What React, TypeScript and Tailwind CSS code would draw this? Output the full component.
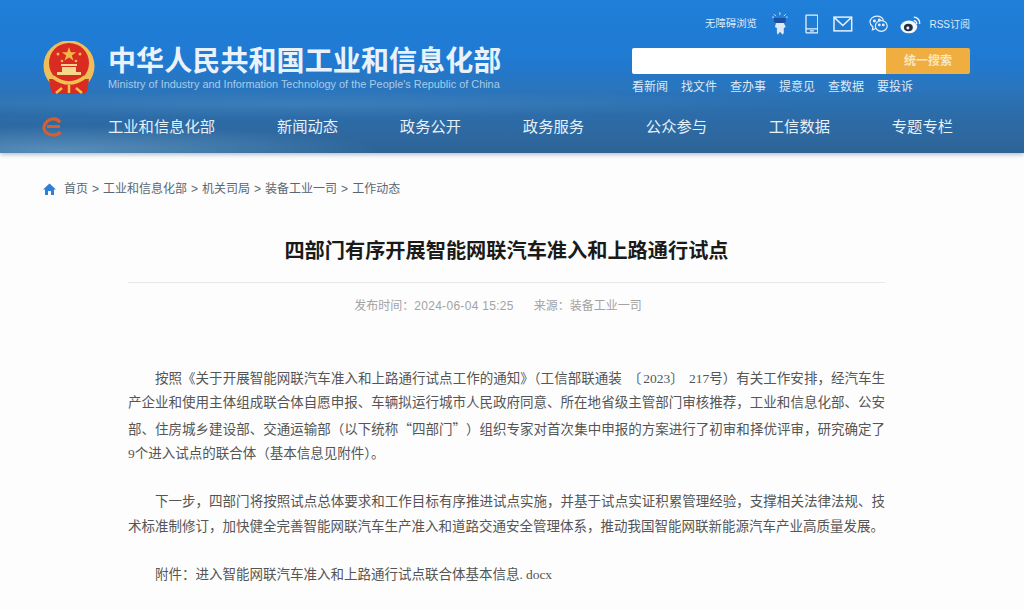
const navItems = ["工业和信息化部", "新闻动态", "政务公开", "政务服务", "公众参与", "工信数据", "专题专栏"];
const quickLinks = ["看新闻", "找文件", "查办事", "提意见", "查数据", "要投诉"];
const crumbs = ["首页", "工业和信息化部", "机关司局", "装备工业一司", "工作动态"];

// full-width punctuation
const C = "\uFF0C";
const L = "\uFF08";
const R = "\uFF09";
const COLON = "\uFF1A";

const line2 = `产企业和使用主体组成联合体自愿申报、车辆拟运行城市人民政府同意、所在地省级主管部门审核推荐${C}工业和信息化部、公安`;
const line4 = `9个进入试点的联合体${L}基本信息见附件${R}。`;
const para2 = `下一步${C}四部门将按照试点总体要求和工作目标有序推进试点实施${C}并基于试点实证积累管理经验${C}支撑相关法律法规、技术标准制修订${C}加快健全完善智能网联汽车生产准入和道路交通安全管理体系${C}推动我国智能网联新能源汽车产业高质量发展。`;

const justified = "[text-align-last:justify] whitespace-nowrap";

function Emblem() {
  return (
    <svg width="52" height="54" viewBox="0 0 52 54">
      <circle cx="26" cy="25" r="25.500" fill="#efbe58" />
      <circle cx="26" cy="22" r="20" fill="#d92b22" />
      <polygon points="26,6 27.800,11.200 33.200,11.200 28.800,14.400 30.500,19.500 26,16.400 21.500,19.500 23.200,14.400 18.800,11.200 24.200,11.200" fill="#f2b84a" />
      <circle cx="15" cy="13" r="1.500" fill="#f2b84a" />
      <circle cx="37" cy="13" r="1.500" fill="#f2b84a" />
      <circle cx="19" cy="20" r="1.300" fill="#f2b84a" />
      <circle cx="33" cy="20" r="1.300" fill="#f2b84a" />
      <path d="M18 23h16v2H18zM19 26h14v5H19zM14 31h24v3H14z" fill="#f6d88a" />
      <path d="M6 38h40l-2 12q-1 3-5 3H13q-4 0-5-3z" fill="#d92b22" />
      <path d="M10 36q16 12 32 0" stroke="#f2c14e" strokeWidth="3.500" fill="none" />
      <path d="M19 47l-6 5M33 47l6 5M26 44v8" stroke="#f2c14e" strokeWidth="2.500" fill="none" />
    </svg>
  );
}

export default function App() {
  return (
    <div className="h-[610px] overflow-hidden bg-[#fdfdfd] font-['Liberation_Sans','Noto_Sans_CJK_SC',sans-serif]">
      {/* Header */}
      <header className="h-[153px] bg-[radial-gradient(ellipse_320px_24px_at_60px_150px,rgba(150,200,235,0.4),transparent),radial-gradient(ellipse_500px_14px_at_300px_104px,rgba(120,175,220,0.22),transparent),linear-gradient(180deg,#1f7fd9_0%,#1f7ad2_38%,#2a75bd_58%,#2b6dab_72%,#2e689f_88%,#2b6596_100%)] text-white shadow-[0_2px_4px_rgba(60,90,120,0.35)]">
        <div className="flex h-[102px] justify-between pl-[43px] pr-[54px]">
          <div className="flex items-start gap-[13px] pt-[41px]">
            <Emblem />
            <div className="pt-[5px]">
              <div className="text-[28px] leading-[32px] font-bold tracking-[0.100px] whitespace-nowrap text-[#e9f2fa]">中华人民共和国工业和信息化部</div>
              <div className="-mt-[1px] text-[10.900px] leading-[14px] whitespace-nowrap text-[#a9cbe8]">Ministry of Industry and Information Technology of the People's Republic of China</div>
            </div>
          </div>
          <div className="w-[338px]">
            <div className="flex h-[48px] items-center justify-start pl-[73px]">
              <span className="w-[52px] text-[10.400px] whitespace-nowrap text-[#dfebf6]">无障碍浏览</span>
              <svg width="16" height="24" viewBox="0 0 16 24" className="ml-[15px]">
                <path d="M8 0v3M2 2l2 2M14 2l-2 2M0 5h2M14 5h2" stroke="#cfe3f5" strokeWidth="1" />
                <path d="M2 6h12v3.500l-2 1.500H4L2 9.500z" fill="#1d4fa0" />
                <path d="M4 11h8l2 4-2 1v5l-1 2-3-3-2 3-1-2v-5l-2-1z" fill="#dfe8f2" />
              </svg>
              <svg width="14" height="20" viewBox="0 0 14 20" fill="none" stroke="#e8f1fa" strokeWidth="1.300" className="ml-[17px]">
                <rect x="1" y="1" width="12" height="18" rx="0.500" />
                <path d="M1 15h12M5 17h4" />
              </svg>
              <svg width="20" height="16" viewBox="0 0 20 16" fill="none" stroke="#e8f1fa" strokeWidth="1.500" className="ml-[15px]">
                <rect x="1" y="1" width="18" height="14" />
                <path d="M1.500 1.500 10 9.500l8.500-8" />
              </svg>
              <svg width="20" height="18" viewBox="0 0 20 18" fill="none" stroke="#e8f1fa" strokeWidth="1.200" className="ml-[16px]">
                <path d="M7 13.500 3.500 15l.5-3C2 10.500 1 9 1 7c0-3.300 3-6 7-6 3.300 0 6 1.800 6.800 4.500" />
                <ellipse cx="12.500" cy="11" rx="6" ry="5.500" />
                <circle cx="5.500" cy="6" r="0.900" fill="#e8f1fa" />
                <circle cx="10.500" cy="5" r="0.900" fill="#e8f1fa" />
                <circle cx="10.500" cy="10" r="0.800" fill="#e8f1fa" />
                <circle cx="14.500" cy="10" r="0.800" fill="#e8f1fa" />
              </svg>
              <svg width="22" height="19" viewBox="0 0 22 19" className="ml-[11px]">
                <ellipse cx="9" cy="12" rx="8.500" ry="6.500" fill="#f4f8fc" />
                <ellipse cx="8.500" cy="12.500" rx="4.500" ry="3.800" fill="#1f2f45" />
                <circle cx="8" cy="13" r="1.500" fill="#f4f8fc" />
                <path d="M14 2a6 6 0 0 1 6 7M14 5.500a3 3 0 0 1 3 3.500" stroke="#f4f8fc" strokeWidth="1.400" fill="none" />
              </svg>
              <span className="ml-[8px] text-[10px] whitespace-nowrap text-[#dfebf6]">RSS订阅</span>
            </div>
            <div className="flex h-[26px] overflow-hidden rounded-[2px]">
              <div className="flex-1 bg-white" />
              <div className="flex w-[84px] items-center justify-center bg-[#efae3f] text-[12px] font-bold text-[#f9e6c2]">统一搜索</div>
            </div>
            <div className="mt-[5px] flex gap-[13px] text-[12px] leading-[17px] text-[#dce9f5]">
              {quickLinks.map((q) => <span key={q}>{q}</span>)}
            </div>
          </div>
        </div>
        <nav className="flex h-[50px] items-center pl-[42px] pr-[71px]">
          <svg width="22" height="20" viewBox="0 0 22 20" fill="none" className="mr-[44px]">
            <path d="M18 9.500H5M18 5.500C16.500 2.800 13 1.500 10 2S2 6 2 10.500 6 17.500 10 18s7-1 8.500-3" stroke="#d4602f" strokeWidth="3.200" />
          </svg>
          <div className="flex flex-1 justify-between text-[15.300px] text-[#e6f0f9]">
            {navItems.map((n) => <span key={n}>{n}</span>)}
          </div>
        </nav>
      </header>

      {/* Breadcrumb */}
      <div className="flex h-[70px] items-center pl-[43px] pt-[1px] text-[12px] text-[#5a6772]">
        <svg width="13" height="12" viewBox="0 0 13 12" className="mr-[8px]">
          <path d="M6.500 0.500 0 6.500h2V12h3V8h3v4h3V6.500h2z" fill="#2f7fd8" />
        </svg>
        {crumbs.map((c, i) => (
          <span key={c}>{i > 0 && <span className="mx-[4px]">&gt;</span>}{c}</span>
        ))}
      </div>

      {/* Article */}
      <main className="ml-[128px] w-[757px]">
        <h1 className="mt-[14px] text-center text-[20.200px] leading-[28px] font-bold text-[#1a1a1a]">四部门有序开展智能网联汽车准入和上路通行试点</h1>
        <div className="mt-[17px] border-t border-[#e8e8e8] pt-[14px] pr-[17px] text-center text-[12px] leading-[18px] text-[#a3a3a3]">
          <span>发布时间{COLON}<span className="tracking-[0.300px]">2024-06-04 15:25</span></span>
          <span className="ml-[20px]">来源{COLON}装备工业一司</span>
        </div>
        <div className="mt-[52px] font-['Liberation_Serif','Noto_Sans_CJK_SC',serif] text-[13.500px] leading-[24.400px] text-[#555555]">
          <p>
            <span className={`block pl-[27px] ${justified}`}>
              按照《关于开展智能网联汽车准入和上路通行试点工作的通知》{L}工信部联通装<span className="ml-[6px]">〔</span><span className="ml-[2px]">2023</span>〕<span className="ml-[5px]">217</span>号{R}有关工作安排{C}经汽车生
            </span>
            <span className={`block ${justified}`}>{line2}</span>
            <span className={`block ${justified}`}>
              部、住房城乡建设部、交通运输部{L}以下统称
              <span className="inline-block w-[13.500px] text-center font-['Noto_Sans_CJK_SC',sans-serif]">“</span>
              四部门
              <span className="inline-block w-[13.500px] text-center font-['Noto_Sans_CJK_SC',sans-serif]">”</span>
              {R}组织专家对首次集中申报的方案进行了初审和择优评审{C}研究确定了
            </span>
            <span className="block">{line4}</span>
          </p>
          <p className="mt-[23.500px] indent-[27px] text-justify">{para2}</p>
          <p className="mt-[24px] indent-[27px]">附件{COLON}进入智能网联汽车准入和上路通行试点联合体基本信息.<span className="ml-[3px]">docx</span></p>
        </div>
      </main>
    </div>
  );
}
